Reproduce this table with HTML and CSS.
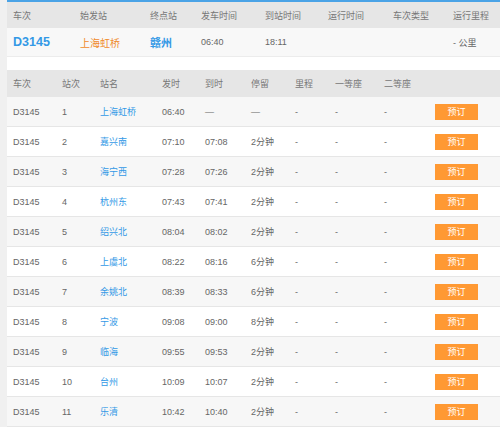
FILE: index.html
```html
<!DOCTYPE html>
<html lang="zh">
<head>
<meta charset="utf-8">
<link rel="stylesheet" href="styles.css">
</head>
<body>
<div class="page">
  <table class="summary">
    <colgroup>
      <col class="s1"><col class="s2"><col class="s3"><col class="s4"><col class="s5"><col class="s6"><col class="s7"><col class="s8">
    </colgroup>
    <thead>
      <tr><th>车次</th><th>始发站</th><th>终点站</th><th>发车时间</th><th>到站时间</th><th>运行时间</th><th>车次类型</th><th>运行里程</th></tr>
    </thead>
    <tbody>
      <tr>
        <td class="train">D3145</td>
        <td class="from">上海虹桥</td>
        <td class="to">赣州</td>
        <td>06:40</td>
        <td>18:11</td>
        <td></td>
        <td></td>
        <td>- 公里</td>
      </tr>
    </tbody>
  </table>

  <table class="stops">
    <colgroup>
      <col class="c1"><col class="c2"><col class="c3"><col class="c4"><col class="c5"><col class="c6"><col class="c7"><col class="c8"><col class="c9"><col class="c10">
    </colgroup>
    <thead>
      <tr><th>车次</th><th>站次</th><th>站名</th><th>发时</th><th>到时</th><th>停留</th><th>里程</th><th>一等座</th><th>二等座</th><th></th></tr>
    </thead>
    <tbody>
      <tr><td>D3145</td><td>1</td><td class="st">上海虹桥</td><td>06:40</td><td>—</td><td>—</td><td>-</td><td>-</td><td>-</td><td><span class="btn">预订</span></td></tr>
      <tr><td>D3145</td><td>2</td><td class="st">嘉兴南</td><td>07:10</td><td>07:08</td><td>2分钟</td><td>-</td><td>-</td><td>-</td><td><span class="btn">预订</span></td></tr>
      <tr><td>D3145</td><td>3</td><td class="st">海宁西</td><td>07:28</td><td>07:26</td><td>2分钟</td><td>-</td><td>-</td><td>-</td><td><span class="btn">预订</span></td></tr>
      <tr><td>D3145</td><td>4</td><td class="st">杭州东</td><td>07:43</td><td>07:41</td><td>2分钟</td><td>-</td><td>-</td><td>-</td><td><span class="btn">预订</span></td></tr>
      <tr><td>D3145</td><td>5</td><td class="st">绍兴北</td><td>08:04</td><td>08:02</td><td>2分钟</td><td>-</td><td>-</td><td>-</td><td><span class="btn">预订</span></td></tr>
      <tr><td>D3145</td><td>6</td><td class="st">上虞北</td><td>08:22</td><td>08:16</td><td>6分钟</td><td>-</td><td>-</td><td>-</td><td><span class="btn">预订</span></td></tr>
      <tr><td>D3145</td><td>7</td><td class="st">余姚北</td><td>08:39</td><td>08:33</td><td>6分钟</td><td>-</td><td>-</td><td>-</td><td><span class="btn">预订</span></td></tr>
      <tr><td>D3145</td><td>8</td><td class="st">宁波</td><td>09:08</td><td>09:00</td><td>8分钟</td><td>-</td><td>-</td><td>-</td><td><span class="btn">预订</span></td></tr>
      <tr><td>D3145</td><td>9</td><td class="st">临海</td><td>09:55</td><td>09:53</td><td>2分钟</td><td>-</td><td>-</td><td>-</td><td><span class="btn">预订</span></td></tr>
      <tr><td>D3145</td><td>10</td><td class="st">台州</td><td>10:09</td><td>10:07</td><td>2分钟</td><td>-</td><td>-</td><td>-</td><td><span class="btn">预订</span></td></tr>
      <tr><td>D3145</td><td>11</td><td class="st">乐清</td><td>10:42</td><td>10:40</td><td>2分钟</td><td>-</td><td>-</td><td>-</td><td><span class="btn">预订</span></td></tr>
    </tbody>
  </table>
</div>
</body>
</html>
```

FILE: styles.css
```css
html, body {
  margin: 0;
  padding: 0;
  background: #f0f0f0;
}
body {
  font-family: "Liberation Sans", "Noto Sans CJK SC", sans-serif;
  font-size: 9px;
  color: #666;
}
.page {
  margin-left: 7px;
  background: #fff;
  border-top: 2px solid #4aa3e6;
  height: 425px;
  overflow: hidden;
}
table {
  border-collapse: collapse;
  table-layout: fixed;
  width: 493px;
}
th {
  font-weight: normal;
  text-align: left;
  color: #777;
  background: #e6e6e6;
  padding: 0 0 0 6px;
  white-space: nowrap;
}
td {
  text-align: left;
  padding: 0 0 0 6px;
  white-space: nowrap;
}
.summary th { height: 26px; }
.summary td {
  height: 28px;
  background: #f8f8f8;
  border-bottom: 1px solid #ececec;
}
.summary .s1 { width: 67px; }
.summary .s2 { width: 70px; }
.summary .s3 { width: 51px; }
.summary .s4 { width: 64px; }
.summary .s5 { width: 63px; }
.summary .s6 { width: 65px; }
.summary .s7 { width: 60px; }
.summary .s8 { width: 53px; }
.summary td.train {
  color: #3399e6;
  font-weight: bold;
  font-size: 12.5px;
}
.summary td.from {
  color: #f08a2a;
  font-size: 10px;
}
.summary td.to {
  color: #3399e6;
  font-weight: bold;
  font-size: 11px;
}
.stops { margin-top: 13px; }
.stops th { height: 27px; }
.stops td {
  height: 29px;
  border-bottom: 1px solid #e6e6e6;
  background: #fff;
}
.stops tbody tr:nth-child(odd) td { background: #f7f7f7; }
.stops .c1 { width: 49px; }
.stops .c2 { width: 38px; }
.stops .c3 { width: 62px; }
.stops .c4 { width: 43px; }
.stops .c5 { width: 46px; }
.stops .c6 { width: 44px; }
.stops .c7 { width: 40px; }
.stops .c8 { width: 49px; }
.stops .c9 { width: 45px; }
.stops .c10 { width: 77px; }
.stops td.st { color: #3399e6; }
.btn {
  display: inline-block;
  width: 43px;
  height: 16px;
  line-height: 16px;
  text-align: center;
  background: #ff9933;
  color: #fff;
  font-size: 9px;
  margin-left: 6px;
  vertical-align: middle;
}
```
